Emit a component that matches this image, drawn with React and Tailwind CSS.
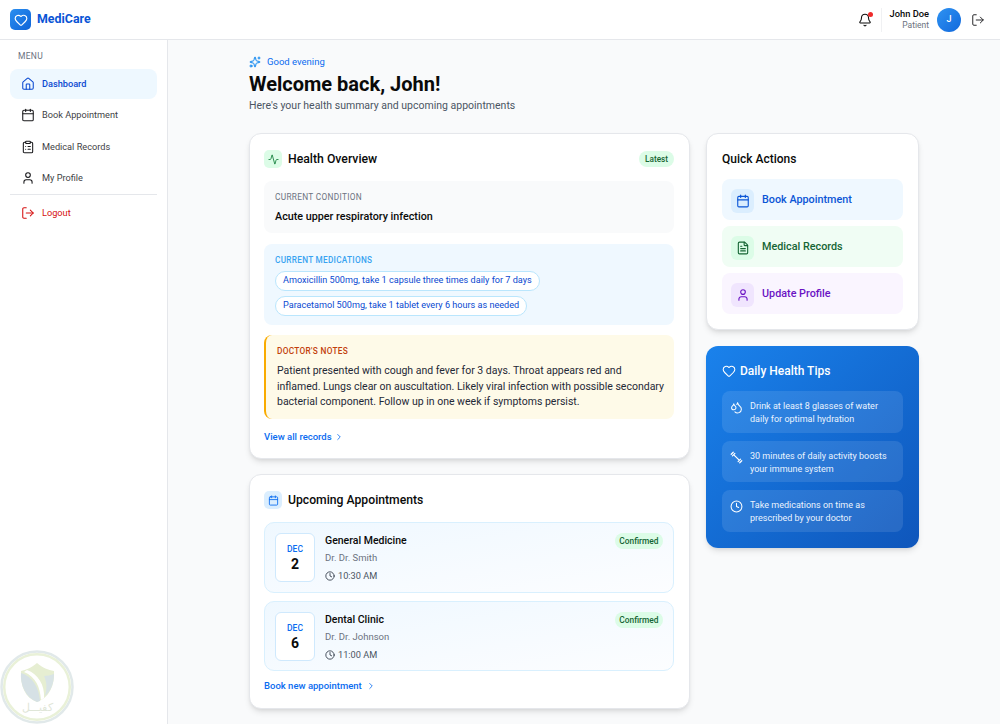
import { Activity, Bell, Calendar, ChevronRight, ClipboardList, Clock, Droplets, FileText, Heart, House, LogOut, Sparkles, User } from "lucide-react";

const navItems = [
  { label: "Dashboard", icon: House, active: true },
  { label: "Book Appointment", icon: Calendar },
  { label: "Medical Records", icon: ClipboardList },
  { label: "My Profile", icon: User },
];

const appointments = [
  { month: "DEC", day: "2", title: "General Medicine", doctor: "Dr. Dr. Smith", time: "10:30 AM", height: "h-[71px]" },
  { month: "DEC", day: "6", title: "Dental Clinic", doctor: "Dr. Dr. Johnson", time: "11:00 AM", height: "h-[70px]" },
];

// thin diagonal dumbbell, the package one reads too heavy at this size
const DumbbellIcon = ({ size, className }) => (
  <svg width={size} height={size} viewBox="0 0 16 16" fill="none" stroke="currentColor" strokeWidth="1.5" strokeLinecap="round" className={className}>
    <path d="M5 5 L11 11 M3 6 L6 3 M10 13 L13 10 M1.5 4 L4 1.5 M12 14.5 L14.5 12" />
  </svg>
);

const tips = [
  { icon: Droplets, text: "Drink at least 8 glasses of water daily for optimal hydration" },
  { icon: DumbbellIcon, text: "30 minutes of daily activity boosts your immune system" },
  { icon: Clock, text: "Take medications on time as prescribed by your doctor" },
];

const Watermark = () => (
  <div className="absolute left-0 bottom-0 w-[75px] h-[75px] pointer-events-none">
    <svg viewBox="0 0 75 75" className="w-full h-full">
      <circle cx="37" cy="38" r="35.5" fill="#ffffff" stroke="#e1e9ea" strokeWidth="2.5" />
      <circle cx="37" cy="38" r="32.8" fill="none" stroke="#e9f1d8" strokeWidth="2.5" />
      <path d="M37 14 C31 19 26 21 21 22 C20 36 25 49 37 53 C49 49 55 36 54 22 C48 21 43 19 37 14 Z" fill="#e6eed2" />
      <path d="M21 24 C32 27 39 38 40 52 L37 53 C26 49 20 36 21 24 Z" fill="#d6e1e5" />
      <path d="M27 21 C38 25 45 36 44 49 L41 51 C40 38 36 28 24 23 Z" fill="#ffffff" />
      <path d="M45 47 C47 40 47 33 44 27 C47 27 51 26 54 25 C54 34 51 42 45 47 Z" fill="#d9e4e6" />
    </svg>
    <span className="absolute left-0 right-0 top-[52px] text-center text-[11px] leading-[14px] text-[#dfe6d8]" dir="rtl">كفيـــل</span>
  </div>
);

const App = () => {
  return (
    <div className="relative h-screen overflow-hidden bg-[#f9fafb] text-[#0a0a0a] font-['Roboto',sans-serif]">
      <header className="h-10 bg-white border-b border-[#e5e7eb] flex items-center justify-between pl-[10px] pr-[15px]">
        <div className="flex items-center gap-[6px]">
          <div className="w-[21px] h-[21px] rounded-[5px] bg-gradient-to-br from-[#2b8ff0] to-[#0f63d8] flex items-center justify-center">
            <Heart size={14} strokeWidth={2} className="text-white" />
          </div>
          <span className="text-[12.4px] font-bold text-[#0a55d6]">MediCare</span>
        </div>
        <div className="flex items-center">
          <div className="relative mr-[9px] mt-[1px]">
            <Bell size={14} strokeWidth={1.8} />
            <span className="absolute -top-[1px] -right-[1px] w-[5px] h-[5px] rounded-full bg-[#ef2b2b]" />
          </div>
          <div className="h-[24px] w-px bg-[#f0f1f3] mr-2" />
          <div className="text-right mr-2">
            <div className="text-[9.3px] leading-[12px] font-medium">John Doe</div>
            <div className="text-[8.5px] leading-[11px] text-[#6b7280]">Patient</div>
          </div>
          <div className="w-6 h-6 rounded-full bg-gradient-to-br from-[#2f93f2] to-[#1268dc] text-white text-[9px] font-medium flex items-center justify-center mr-[10px]">J</div>
          <LogOut size={14} strokeWidth={1.7} className="text-[#27272a]" />
        </div>
      </header>

      <div className="flex h-[684px]">
        <aside className="w-[168px] shrink-0 bg-white border-r border-[#e5e7eb] px-[10px] pt-[10px]">
          <div className="text-[8.5px] leading-3 tracking-[0.3px] text-[#6b7280] pl-2 mb-[7px]">MENU</div>
          <nav className="flex flex-col gap-[2px]">
            {navItems.map((item) => (
              <div
                key={item.label}
                className={`h-[29.5px] rounded-lg flex items-center gap-[7px] pl-[11px] text-[9.2px] ${item.active ? "bg-[#eef8ff] text-[#0a49d1] font-medium" : "text-[#3f3f46]"}`}
              >
                <item.icon size={14} strokeWidth={1.8} className={item.active ? "text-[#0a49d1]" : "text-[#18181b]"} />
                {item.label}
              </div>
            ))}
          </nav>
          <div className="border-t border-[#e5e7eb] mt-[1px] pt-[3px]">
            <div className="h-[29.5px] flex items-center gap-[7px] pl-[11px] text-[9.2px] text-[#d50f0f]">
              <LogOut size={14} strokeWidth={1.8} />
              Logout
            </div>
          </div>
        </aside>

        <main className="flex-1 pl-[81px] pr-[81px] pt-[16px]">
          <div className="flex items-center gap-[6px] h-3 text-[9.5px] leading-3 text-[#0a6cf0]">
            <Sparkles size={12} strokeWidth={2} className="text-[#0a84f0]" />
            Good evening
          </div>
          <h1 className="text-[20px] leading-[28px] font-bold mt-[2px]">Welcome back, John!</h1>
          <p className="text-[10.5px] leading-[14px] text-[#4b5563] mt-[1px]">Here's your health summary and upcoming appointments</p>

          <div className="grid grid-cols-[441px_213px] gap-4 mt-[20px]">
            <div className="flex flex-col gap-[15px]">
              <section className="bg-white border border-[#e5e7eb] rounded-xl shadow-md pl-[14px] pr-[15px] pt-[16px] h-[326px]">
                <div className="flex items-center justify-between h-[18px]">
                  <div className="flex items-center gap-[6px]">
                    <div className="w-[18px] h-[18px] rounded-[5px] bg-[#dcfce7] flex items-center justify-center">
                      <Activity size={11} strokeWidth={1.9} className="text-[#15803d]" />
                    </div>
                    <h2 className="text-[12.25px] font-medium">Health Overview</h2>
                  </div>
                  <span className="px-[6px] h-4 rounded-full bg-[#dcfce7] text-[#166534] text-[8.2px] font-medium flex items-center">Latest</span>
                </div>

                <div className="mt-[13px] h-[52px] rounded-lg bg-[#f9fafb] px-[11px] pt-[10px]">
                  <div className="text-[8.3px] leading-3 tracking-[0.3px] text-[#6b7280]">CURRENT CONDITION</div>
                  <div className="text-[10.75px] leading-[14px] font-medium mt-[7px]">Acute upper respiratory infection</div>
                </div>

                <div className="mt-[11px] h-[81px] rounded-lg bg-[#eff8ff] px-[11px] pt-[10px]">
                  <div className="text-[8.2px] leading-3 tracking-[0.3px] font-medium text-[#38a3f1]">CURRENT MEDICATIONS</div>
                  <div className="flex flex-col items-start gap-[5px] mt-[5px]">
                    <span className="h-5 px-[7px] rounded-full bg-white border border-[#bae6fd] text-[9.1px] text-[#0a49d1] flex items-center">Amoxicillin 500mg, take 1 capsule three times daily for 7 days</span>
                    <span className="h-5 px-[7px] rounded-full bg-white border border-[#bae6fd] text-[9.1px] text-[#0a49d1] flex items-center">Paracetamol 500mg, take 1 tablet every 6 hours as needed</span>
                  </div>
                </div>

                <div className="mt-[10px] h-[84px] rounded-lg bg-[#fefae8] border-l-[2px] border-[#f9ab00] pl-[11px] pr-[9px] pt-[10px]">
                  <div className="text-[8.3px] leading-3 tracking-[0.3px] font-medium text-[#c2410c]">DOCTOR'S NOTES</div>
                  <p className="text-[10.5px] leading-[15.7px] text-[#1f2937] mt-[6px]">Patient presented with cough and fever for 3 days. Throat appears red and inflamed. Lungs clear on auscultation. Likely viral infection with possible secondary bacterial component. Follow up in one week if symptoms persist.</p>
                </div>

                <div className="mt-[11px] flex items-center gap-[2px] text-[9.5px] leading-[14px] text-[#0a6cf0] font-medium">
                  View all records
                  <ChevronRight size={10} strokeWidth={2} />
                </div>
              </section>

              <section className="bg-white border border-[#e5e7eb] rounded-xl shadow-md pl-[14px] pr-[15px] pt-[16px] h-[235px]">
                <div className="flex items-center gap-[6px] h-[18px]">
                  <div className="w-[18px] h-[18px] rounded-[5px] bg-[#dbeefe] flex items-center justify-center">
                    <Calendar size={11} strokeWidth={1.9} className="text-[#0a6cf0]" />
                  </div>
                  <h2 className="text-[12.2px] font-medium">Upcoming Appointments</h2>
                </div>

                <div className="flex flex-col gap-2 mt-[13px]">
                  {appointments.map((appt) => (
                    <div key={appt.title} className={`${appt.height} rounded-[10px] border border-[#d9f0fe] bg-gradient-to-br from-[#eff8ff] to-[#fcfdff] flex items-start pl-[10px] pr-[10px] pt-[10px]`}>
                      <div className="w-10 h-[49px] pt-[2px] rounded-md bg-white border border-[#cfe9fd] flex flex-col items-center justify-center shrink-0">
                        <span className="text-[8.5px] leading-[11px] font-medium text-[#0a6cf0]">{appt.month}</span>
                        <span className="text-[14px] leading-[18px] font-bold">{appt.day}</span>
                      </div>
                      <div className="ml-[10px] flex-1 pt-[1px]">
                        <div className="text-[10.5px] leading-[14px] font-medium">{appt.title}</div>
                        <div className="text-[9.5px] leading-[13px] text-[#6b7280] mt-[3px]">{appt.doctor}</div>
                        <div className="flex items-center gap-[3px] text-[9.2px] leading-[13px] text-[#4b5563] mt-[5px]">
                          <Clock size={10} strokeWidth={1.9} className="text-[#1f2937]" />
                          {appt.time}
                        </div>
                      </div>
                      <span className="h-4 px-[4.5px] rounded-full bg-[#dcfce7] text-[#166534] text-[8.4px] font-medium flex items-center">Confirmed</span>
                    </div>
                  ))}
                </div>

                <div className="mt-[8px] flex items-center gap-[4px] text-[9.5px] leading-[14px] text-[#0a6cf0] font-medium">
                  Book new appointment
                  <ChevronRight size={10} strokeWidth={2} />
                </div>
              </section>
            </div>

            <div className="flex flex-col gap-4">
              <section className="bg-white border border-[#e5e7eb] rounded-xl shadow-md px-[15px] pt-[16px] h-[197px]">
                <h2 className="text-[12px] leading-[17px] font-medium pt-[1px]">Quick Actions</h2>
                <div className="flex flex-col gap-[6px] mt-[11px]">
                  <div className="h-[41px] pt-[2px] rounded-lg bg-[#eff8ff] flex items-center pl-[9px] gap-[8px] text-[10.8px] font-medium text-[#0a55d6]">
                    <div className="w-[23px] h-6 rounded-md bg-[#dbeefe] flex items-center justify-center"><Calendar size={14} strokeWidth={1.9} /></div>
                    Book Appointment
                  </div>
                  <div className="h-[41px] pt-[2px] rounded-lg bg-[#f0fdf4] flex items-center pl-[9px] gap-[8px] text-[10.8px] font-medium text-[#166534]">
                    <div className="w-[23px] h-6 rounded-md bg-[#dcfce7] flex items-center justify-center"><FileText size={14} strokeWidth={1.9} /></div>
                    Medical Records
                  </div>
                  <div className="h-[41px] pt-[2px] rounded-lg bg-[#faf5ff] flex items-center pl-[9px] gap-[8px] text-[10.8px] font-medium text-[#6b13c4]">
                    <div className="w-[23px] h-6 rounded-md bg-[#f0e5fe] flex items-center justify-center"><User size={14} strokeWidth={1.9} /></div>
                    Update Profile
                  </div>
                </div>
              </section>

              <section className="rounded-xl bg-gradient-to-br from-[#1a82ec] to-[#0f56bb] shadow-md px-[16px] pt-[17px] h-[202px] text-white">
                <div className="flex items-center gap-[4px] h-4">
                  <Heart size={14} strokeWidth={1.8} />
                  <h2 className="text-[12px] font-medium">Daily Health Tips</h2>
                </div>
                <div className="flex flex-col gap-[8px] mt-[12px]">
                  {tips.map((tip) => (
                    <div key={tip.text} className="h-[41.5px] rounded-lg bg-white/10 flex items-start gap-[7px] pl-2 pr-2 pt-[9px] text-[9px] leading-[13px] text-[#eaf3fe]">
                      <tip.icon size={13} strokeWidth={1.9} className="shrink-0 mt-[1px] text-white" />
                      <span>{tip.text}</span>
                    </div>
                  ))}
                </div>
              </section>
            </div>
          </div>
        </main>
      </div>

      <Watermark />
    </div>
  );
};

export default App;
